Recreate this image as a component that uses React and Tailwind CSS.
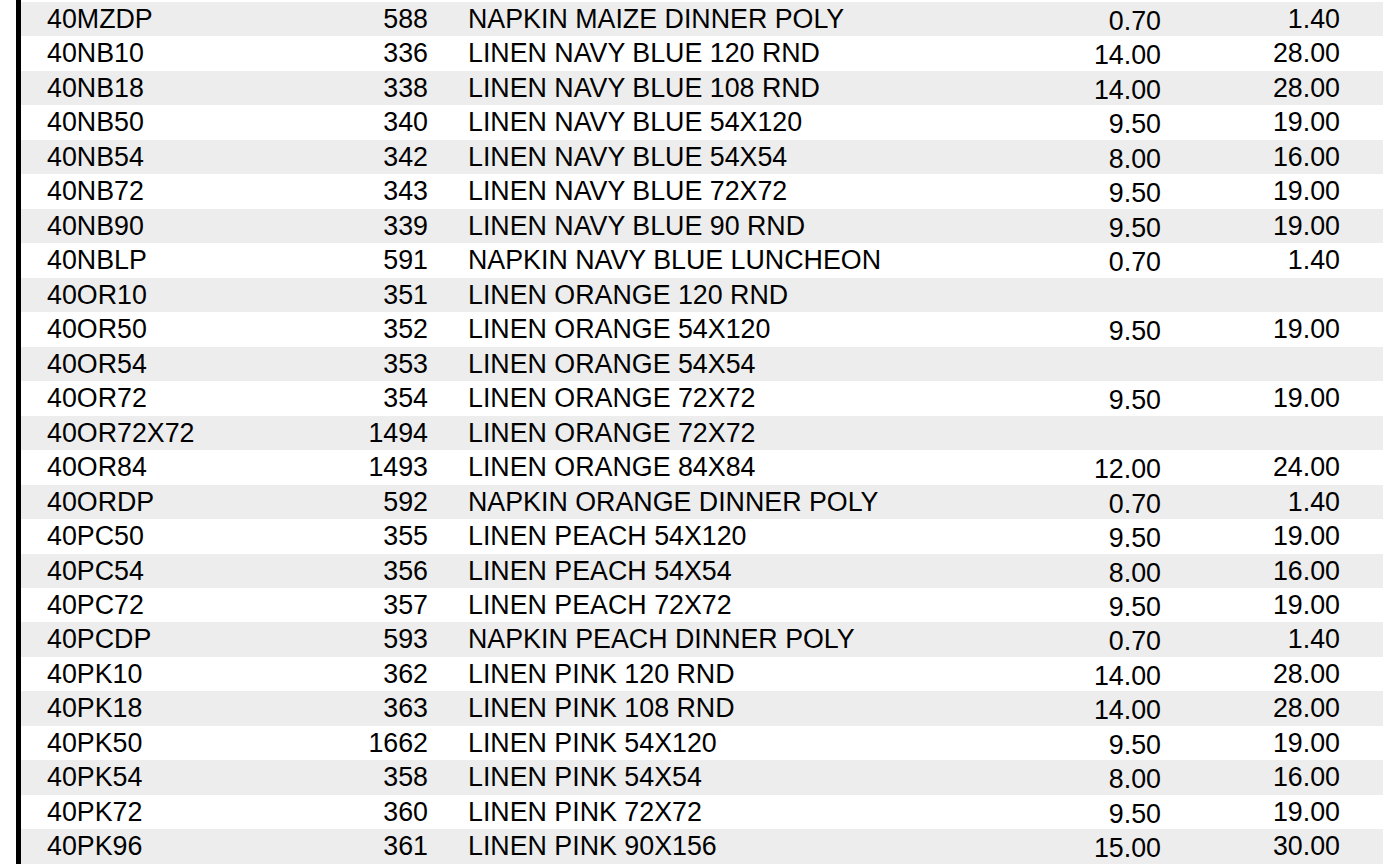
// Price list table: linen and napkin items with codes and two price columns.

const ROWS = [
  ["40MZDP", "588", "NAPKIN MAIZE DINNER POLY", "0.70", "1.40"],
  ["40NB10", "336", "LINEN NAVY BLUE 120 RND", "14.00", "28.00"],
  ["40NB18", "338", "LINEN NAVY BLUE 108 RND", "14.00", "28.00"],
  ["40NB50", "340", "LINEN NAVY BLUE 54X120", "9.50", "19.00"],
  ["40NB54", "342", "LINEN NAVY BLUE 54X54", "8.00", "16.00"],
  ["40NB72", "343", "LINEN NAVY BLUE 72X72", "9.50", "19.00"],
  ["40NB90", "339", "LINEN NAVY BLUE 90 RND", "9.50", "19.00"],
  ["40NBLP", "591", "NAPKIN NAVY BLUE LUNCHEON", "0.70", "1.40"],
  ["40OR10", "351", "LINEN ORANGE 120 RND", "", ""],
  ["40OR50", "352", "LINEN ORANGE 54X120", "9.50", "19.00"],
  ["40OR54", "353", "LINEN ORANGE 54X54", "", ""],
  ["40OR72", "354", "LINEN ORANGE 72X72", "9.50", "19.00"],
  ["40OR72X72", "1494", "LINEN ORANGE 72X72", "", ""],
  ["40OR84", "1493", "LINEN ORANGE 84X84", "12.00", "24.00"],
  ["40ORDP", "592", "NAPKIN ORANGE DINNER POLY", "0.70", "1.40"],
  ["40PC50", "355", "LINEN PEACH 54X120", "9.50", "19.00"],
  ["40PC54", "356", "LINEN PEACH 54X54", "8.00", "16.00"],
  ["40PC72", "357", "LINEN PEACH 72X72", "9.50", "19.00"],
  ["40PCDP", "593", "NAPKIN PEACH DINNER POLY", "0.70", "1.40"],
  ["40PK10", "362", "LINEN PINK 120 RND", "14.00", "28.00"],
  ["40PK18", "363", "LINEN PINK 108 RND", "14.00", "28.00"],
  ["40PK50", "1662", "LINEN PINK 54X120", "9.50", "19.00"],
  ["40PK54", "358", "LINEN PINK 54X54", "8.00", "16.00"],
  ["40PK72", "360", "LINEN PINK 72X72", "9.50", "19.00"],
  ["40PK96", "361", "LINEN PINK 90X156", "15.00", "30.00"],
];

export default function App() {
  return (
    <div
      className="h-screen overflow-hidden bg-white pl-[16px] pr-[3px] text-black"
      style={{ fontFamily: '"Liberation Sans", Arial, sans-serif' }}
    >
      <div className="h-full border-l-[5px] border-black pt-[2px]">
        {ROWS.map(([code, id, desc, price, rental], i) => (
          <div
            key={code}
            className={`grid h-[34.48px] grid-cols-[279px_128px_572px_161px_179px_1fr] text-[26.8px] leading-[34.48px] ${
              i % 2 === 0 ? "bg-[#ededed]" : "bg-white"
            }`}
          >
            <div className="whitespace-nowrap pl-[26px]">{code}</div>
            <div className="text-right">{id}</div>
            <div className="whitespace-nowrap pl-[40px]">{desc}</div>
            <div className="pt-[2px] text-right">{price}</div>
            <div className="text-right">{rental}</div>
            <div />
          </div>
        ))}
      </div>
    </div>
  );
}
